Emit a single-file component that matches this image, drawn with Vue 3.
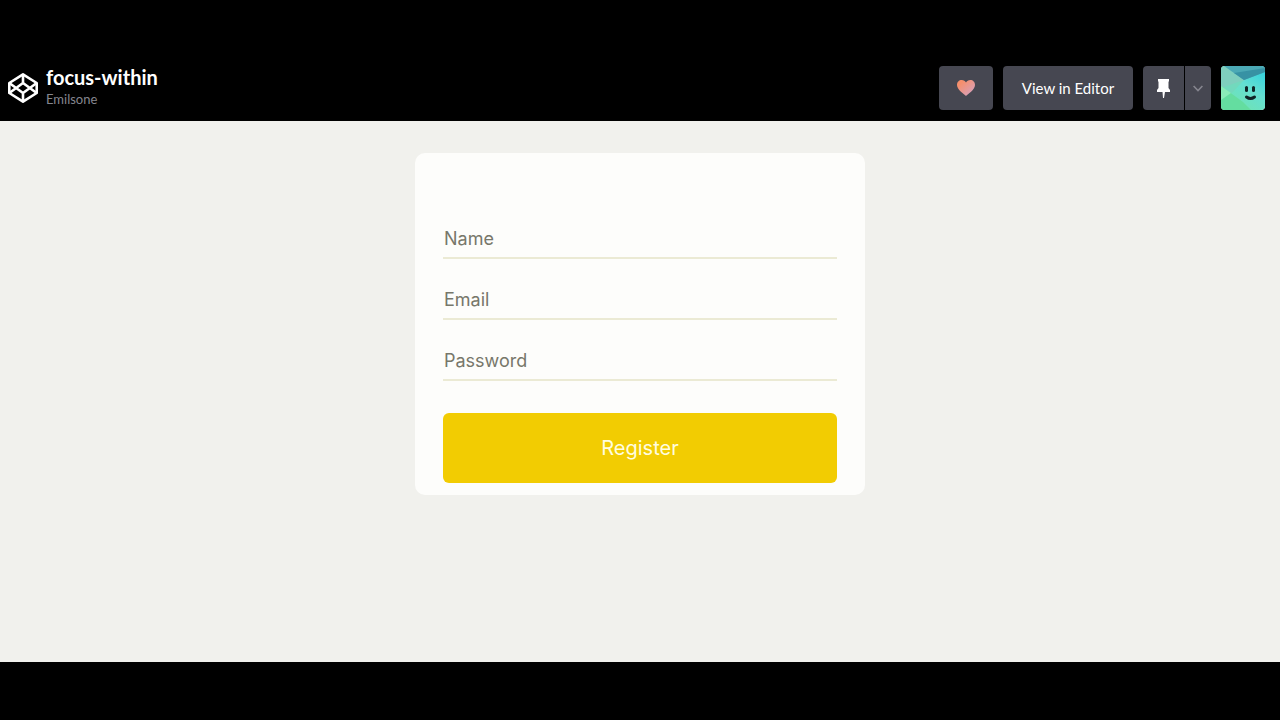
<script setup>
const fields = [
  { id: 'name', type: 'text', label: 'Name' },
  { id: 'email', type: 'email', label: 'Email' },
  { id: 'password', type: 'password', label: 'Password' },
]
</script>

<template>
  <div class="page">
    <header class="bar">
      <a class="logo" href="#" aria-label="Home">
        <svg viewBox="0 0 30 32" width="30" height="32" fill="none" stroke="#fff" stroke-width="2.6" stroke-linejoin="round">
          <path d="M15 2.300 28.700 11V21L15 29.700 1.300 21V11Z" />
          <path d="M15 2.300V11M15 21V29.700M1.300 11 15 21 28.700 11M1.300 21 15 11 28.700 21" />
        </svg>
      </a>
      <div class="titles">
        <h1>focus-within</h1>
        <a href="#">Emilsone</a>
      </div>
      <nav class="actions">
        <button class="btn heart" type="button" aria-label="Love">
          <svg viewBox="0 0 18 16" width="18" height="16">
            <defs>
              <linearGradient id="love" x1="0" y1="0" x2="1" y2="1">
                <stop offset="0.2" stop-color="#f58f6c" />
                <stop offset="1" stop-color="#d2a4ca" />
              </linearGradient>
            </defs>
            <path fill="url(#love)" d="M9 16C7.5 14.5 0 9.7 0 5 0 2 2 0 4.7 0 6.7 0 8.2 1 9 2.5 9.8 1 11.3 0 13.3 0 16 0 18 2 18 5 18 9.7 10.5 14.5 9 16Z" />
          </svg>
        </button>
        <button class="btn editor" type="button">View in Editor</button>
        <div class="group">
          <button class="btn pin" type="button" aria-label="Pin">
            <svg viewBox="0 0 14 20" width="14" height="20" fill="#fff">
              <path d="M1 1H12V3L11.500 4V10L13 12V14H8L7 20H6L5.500 14H0V12L1.500 10V4L1 3Z" />
            </svg>
          </button>
          <button class="btn more" type="button" aria-label="More options">
            <svg viewBox="0 0 10 7" width="10" height="7" fill="none" stroke="#85858e" stroke-width="1.6">
              <path d="M.6 1 5 5.5 9.4 1" />
            </svg>
          </button>
        </div>
        <button class="avatar" type="button" aria-label="Profile">
          <svg viewBox="0 0 44 44" width="44" height="44">
            <defs>
              <linearGradient id="face" x1="1" y1="0" x2="0.3" y2="1">
                <stop offset="0" stop-color="#28cfe1" />
                <stop offset="0.5" stop-color="#65dfd1" />
                <stop offset="1" stop-color="#72e4ae" />
              </linearGradient>
            </defs>
            <rect width="44" height="44" fill="url(#face)" />
            <path d="M0 0H13L24 14 0 24Z" fill="#7fcfbe" />
            <path d="M3 0H44V6L23 14Z" fill="#4ba9b5" />
            <path d="M13 7 44 2V6L23 14Z" fill="#3792a4" />
            <path d="M0 22 23 14 8 30Z" fill="#72d9bd" />
            <path d="M0 20 22 36 30 44H0Z" fill="#64dda0" />
            <path d="M0 20 10 27 0 34Z" fill="#8aebb8" />
            <g fill="#102426">
              <rect x="24" y="20" width="3" height="6" rx="1.5" />
              <rect x="31" y="20" width="3" height="6" rx="1.5" />
            </g>
            <path d="M25.500 31Q29.500 34 33.500 31" fill="none" stroke="#102426" stroke-width="3" stroke-linecap="round" />
          </svg>
        </button>
      </nav>
    </header>
    <main class="stage">
      <form class="card" @submit.prevent>
        <input
          v-for="f in fields"
          :id="f.id"
          :key="f.id"
          class="field"
          :type="f.type"
          :placeholder="f.label"
          :aria-label="f.label"
        />
        <button class="register" type="submit">Register</button>
      </form>
    </main>
  </div>
</template>

<style>
body {
  margin: 0;
  background: #000;
}
</style>

<style scoped>
.page {
  box-sizing: border-box;
  min-height: 100vh;
  padding: 55px 0 58px;
  display: flex;
  flex-direction: column;
  background: #000;
  font-family: Lato, sans-serif;
}
.bar {
  box-sizing: border-box;
  height: 66px;
  padding: 0 15px 0 8px;
  display: flex;
  align-items: center;
}
.logo {
  display: flex;
}
.titles {
  margin-left: 8px;
  display: flex;
  flex-direction: column;
}
.titles h1 {
  margin: 0;
  font-size: 20px;
  line-height: 22px;
  font-weight: 700;
  color: #fff;
}
.titles a {
  font-size: 13px;
  line-height: 22px;
  color: #85868f;
  text-decoration: none;
}
.actions {
  margin-left: auto;
  display: flex;
  gap: 10px;
}
.btn {
  height: 44px;
  padding: 0;
  border: 0;
  border-radius: 4px;
  background: #464751;
  color: #fff;
  font: 15px Lato, sans-serif;
  display: flex;
  align-items: center;
  justify-content: center;
}
.heart {
  width: 54px;
}
.editor {
  width: 130px;
}
.group {
  display: flex;
  gap: 1px;
}
.pin {
  width: 41px;
  border-radius: 4px 0 0 4px;
}
.more {
  width: 26px;
  border-radius: 0 4px 4px 0;
}
.avatar {
  width: 44px;
  height: 44px;
  padding: 0;
  border: 0;
  border-radius: 4px;
  overflow: hidden;
  display: flex;
}
.stage {
  flex: 1;
  padding: 32px 16px;
  background: #f1f1ed;
}
.card {
  box-sizing: border-box;
  max-width: 450px;
  margin: 0 auto;
  padding: 65px 28px 12px;
  border-radius: 10px;
  background: #fdfdfb;
  display: flex;
  flex-direction: column;
}
.field {
  box-sizing: border-box;
  width: 100%;
  height: 41px;
  margin-bottom: 20px;
  padding: 2px 0 0 1px;
  border: 0;
  border-bottom: 2px solid #ebead4;
  border-radius: 0;
  background: transparent;
  color: #333;
  font: 18px Inter, sans-serif;
  outline: none;
}
.field::placeholder {
  color: #77776a;
  opacity: 1;
}
.register {
  height: 70px;
  margin-top: 12px;
  border: 0;
  border-radius: 6px;
  background: #f2cc02;
  color: #fffde0;
  font: 20px Inter, sans-serif;
}
</style>
